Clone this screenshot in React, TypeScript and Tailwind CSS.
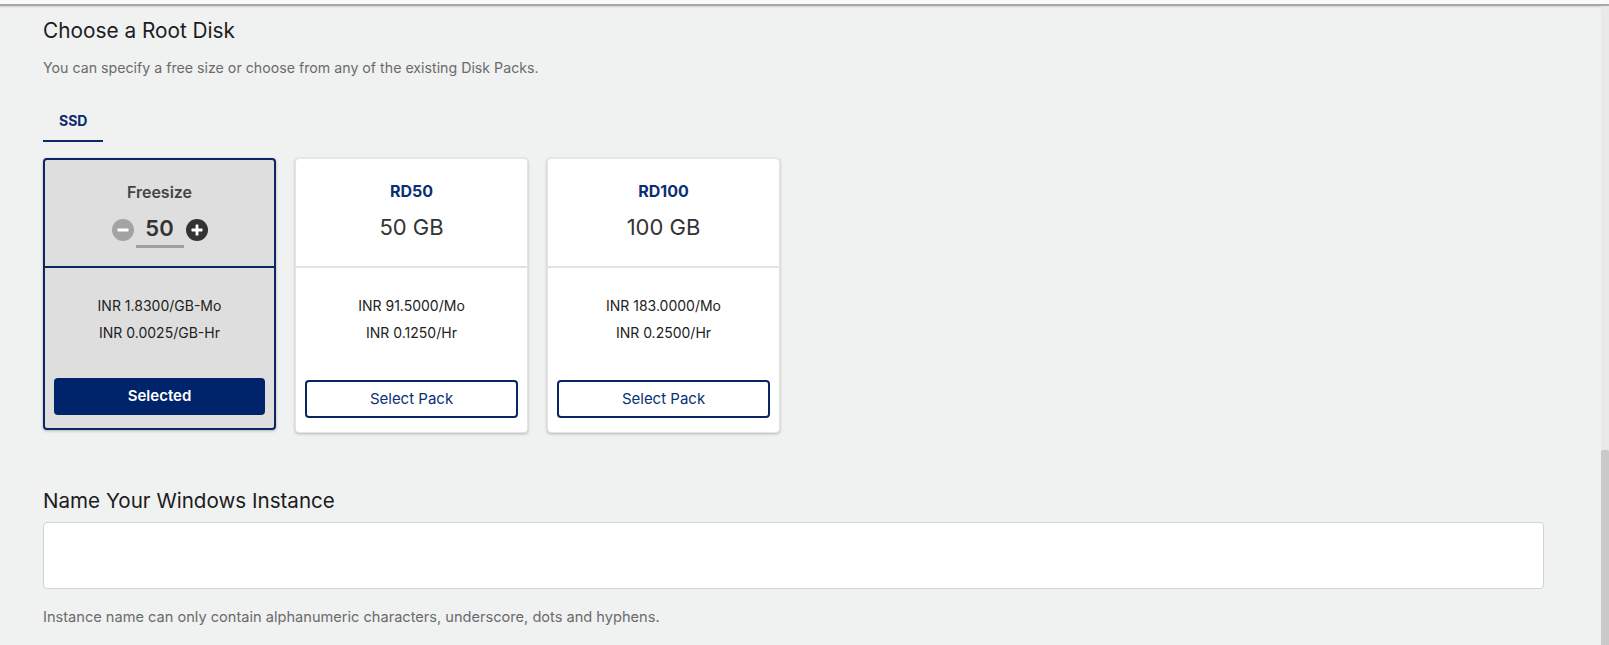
import { useState } from 'react';

const packs = [
  { id: 'RD50', size: '50 GB', mo: 'INR 91.5000/Mo', hr: 'INR 0.1250/Hr' },
  { id: 'RD100', size: '100 GB', mo: 'INR 183.0000/Mo', hr: 'INR 0.2500/Hr' },
];

const MinusIcon = () => (
  <svg width="22" height="22" viewBox="0 0 22 22">
    <circle cx="11" cy="11" r="11" fill="#a3a3a3" />
    <rect x="5.5" y="9.6" width="11" height="2.8" rx="0.6" fill="#ffffff" />
  </svg>
);

const PlusIcon = () => (
  <svg width="22" height="22" viewBox="0 0 22 22">
    <circle cx="11" cy="11" r="11" fill="#333333" />
    <rect x="5.5" y="9.6" width="11" height="2.8" rx="0.6" fill="#ffffff" />
    <rect x="9.6" y="5.5" width="2.8" height="11" rx="0.6" fill="#ffffff" />
  </svg>
);

const App = () => {
  const [size, setSize] = useState(50);
  const [name, setName] = useState('');

  return (
    <div className="h-[645px] overflow-hidden bg-[#f0f1f1] font-['Inter',sans-serif] flex flex-col">
      {/* top edge of the header */}
      <div className="h-[6px] bg-[#fafafa] border-b-2 border-[#a8a8a8] shadow-[0_1px_2px_rgba(0,0,0,0.15)] shrink-0" />

      <div className="flex flex-1 min-h-0">
        <div className="flex-1 pl-[43px] pr-[57px] pt-[11px]">
          <h2 className="text-[20.8px] leading-[28px] text-[#1c1c1c]">Choose a Root Disk</h2>
          <p className="mt-[13px] text-[14.2px] leading-[20px] text-[#6b6b6b]">
            You can specify a free size or choose from any of the existing Disk Packs.
          </p>

          <div className="mt-[33px] flex">
            <div className="px-4 pb-[9px] border-b-2 border-[#0b2a6b] text-[14px] leading-[20px] font-bold text-[#0b2a6b]">
              SSD
            </div>
          </div>

          <div className="mt-4 flex items-start gap-[19px]">
            {/* freesize card (selected) */}
            <div className="w-[233px] h-[272px] flex flex-col bg-[#dedede] border-2 border-[#0b2462] rounded-[4px] shadow-[0_1px_3px_rgba(0,0,0,0.25)]">
              <div className="h-[106px] flex flex-col items-center pt-[20px]">
                <div className="text-[16px] leading-[24px] font-semibold text-[#444444]">Freesize</div>
                <div className="mt-[7px] flex items-center gap-[2px] h-[37px]">
                  <button onClick={() => setSize(Math.max(1, size - 1))}>
                    <MinusIcon />
                  </button>
                  <input
                    value={size}
                    onChange={(e) => setSize(Number(e.target.value) || 0)}
                    className="w-[48px] h-[37px] bg-transparent text-center text-[22px] font-semibold text-[#333333] border-b-[3px] border-[#a0a0a0] outline-none"
                  />
                  <button onClick={() => setSize(size + 1)}>
                    <PlusIcon />
                  </button>
                </div>
              </div>
              <div className="h-[2px] bg-[#0b2462]" />
              <div className="flex-1 flex flex-col items-center pt-[24px] px-[9px] pb-[13px]">
                <div className="text-[14px] leading-[27px] text-[#222222]">INR 1.8300/GB-Mo</div>
                <div className="text-[14px] leading-[27px] text-[#222222]">INR 0.0025/GB-Hr</div>
                <button className="mt-auto w-full h-[37px] rounded-[4px] bg-[#00246b] text-white text-[15px] font-semibold">
                  Selected
                </button>
              </div>
            </div>

            {packs.map((p) => (
              <div
                key={p.id}
                className="w-[233px] h-[275px] flex flex-col bg-white border border-[#e4e4e4] rounded-[4px] shadow-[0_1px_3px_rgba(0,0,0,0.25)]"
              >
                <div className="h-[107px] flex flex-col items-center pt-[20px]">
                  <div className="text-[16px] leading-[24px] font-bold text-[#0b2f74]">{p.id}</div>
                  <div className="mt-[9px] text-[22px] leading-[30px] text-[#333333]">{p.size}</div>
                </div>
                <div className="h-[2px] bg-[#e2e2e2]" />
                <div className="flex-1 flex flex-col items-center pt-[24px] px-[9px] pb-[14px]">
                  <div className="text-[14px] leading-[27px] text-[#222222]">{p.mo}</div>
                  <div className="text-[14px] leading-[27px] text-[#222222]">{p.hr}</div>
                  <button className="mt-auto w-full h-[38px] rounded-[4px] border-2 border-[#0b2462] bg-white text-[#0b2f74] text-[15px]">
                    Select Pack
                  </button>
                </div>
              </div>
            ))}
          </div>

          <h2 className="mt-[54px] text-[20.6px] leading-[28px] text-[#1c1c1c]">Name Your Windows Instance</h2>
          <input
            value={name}
            onChange={(e) => setName(e.target.value)}
            className="mt-[7px] block w-full h-[67px] bg-white border border-[#cfd4da] rounded-[4px] px-3 outline-none"
          />
          <p className="mt-[18px] text-[14.6px] leading-[20px] text-[#6b6b6b]">
            Instance name can only contain alphanumeric characters, underscore, dots and hyphens.
          </p>
        </div>

        {/* page scrollbar */}
        <div className="w-[8px] shrink-0 bg-[#e9e9e9] flex flex-col">
          <div className="h-[444px]" />
          <div className="flex-1 bg-[#c9c9c9] rounded-t-[2px]" />
        </div>
      </div>
    </div>
  );
};

export default App;
